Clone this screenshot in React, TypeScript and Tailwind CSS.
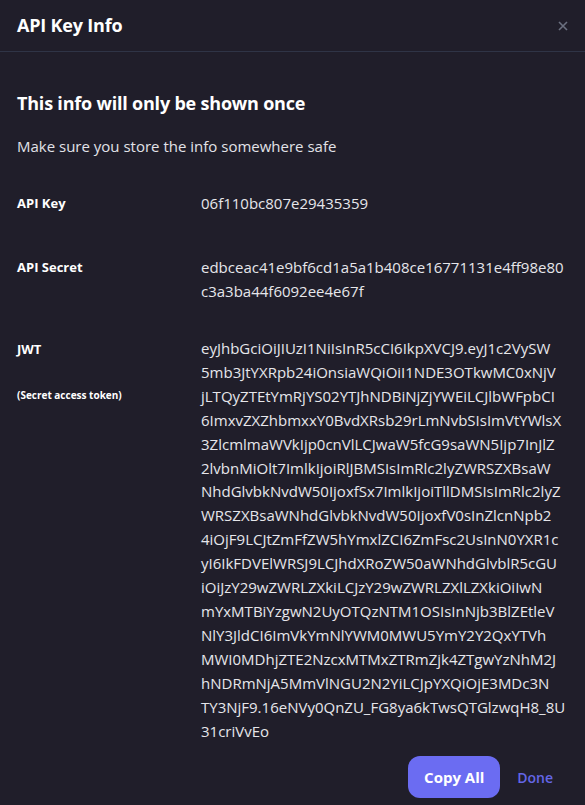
import React from "react";

const JWT_LINES = [
  "eyJhbGciOiJIUzI1NiIsInR5cCI6IkpXVCJ9.eyJ1c2VySW",
  "5mb3JtYXRpb24iOnsiaWQiOiI1NDE3OTkwMC0xNjV",
  "jLTQyZTEtYmRjYS02YTJhNDBiNjZjYWEiLCJlbWFpbCI",
  "6ImxvZXZhbmxxY0BvdXRsb29rLmNvbSIsImVtYWlsX",
  "3ZlcmlmaWVkIjp0cnVlLCJwaW5fcG9saWN5Ijp7InJlZ",
  "2lvbnMiOlt7ImlkIjoiRlJBMSIsImRlc2lyZWRSZXBsaW",
  "NhdGlvbkNvdW50IjoxfSx7ImlkIjoiTllDMSIsImRlc2lyZ",
  "WRSZXBsaWNhdGlvbkNvdW50IjoxfV0sInZlcnNpb2",
  "4iOjF9LCJtZmFfZW5hYmxlZCI6ZmFsc2UsInN0YXR1c",
  "yI6IkFDVElWRSJ9LCJhdXRoZW50aWNhdGlvblR5cGU",
  "iOiJzY29wZWRLZXkiLCJzY29wZWRLZXlLZXkiOiIwN",
  "mYxMTBiYzgwN2UyOTQzNTM1OSIsInNjb3BlZEtleV",
  "NlY3JldCI6ImVkYmNlYWM0MWU5YmY2Y2QxYTVh",
  "MWI0MDhjZTE2NzcxMTMxZTRmZjk4ZTgwYzNhM2J",
  "hNDRmNjA5MmVlNGU2N2YiLCJpYXQiOjE3MDc3N",
  "TY3NjF9.16eNVy0QnZU_FG8ya6kTwsQTGlzwqH8_8U",
  "31criVvEo",
];

export default function App() {
  return (
    <div
      className="w-[585px] h-[805px] overflow-hidden bg-[#201e2a] text-[#e6e6ea]"
      style={{ fontFamily: '"Open Sans", "Noto Sans", sans-serif' }}
    >
      {/* header */}
      <div className="h-[52px] flex items-center justify-between pl-[17px] pr-[14px] border-b border-[#2f3446]">
        <h2 className="text-[18px] font-bold text-white tracking-[-0.2px]">API Key Info</h2>
        <button className="text-[#6b7080] w-4 h-4 flex items-center justify-center">
          <svg width="10" height="10" viewBox="0 0 10 10" fill="none" stroke="currentColor" strokeWidth="1.6">
            <path d="M1 1l8 8M9 1l-8 8" />
          </svg>
        </button>
      </div>

      <div className="px-[17px] pt-[38px]">
        <h3 className="text-[18px] font-bold text-white leading-[26px] tracking-[-0.2px]">
          This info will only be shown once
        </h3>
        <p className="mt-[20px] text-[15px] leading-[20px] text-[#e2e2e8]">
          Make sure you store the info somewhere safe
        </p>

        <div className="mt-[35px] grid grid-cols-[184px_1fr]">
          <div className="text-[13px] font-bold pt-[3px] text-white">API Key</div>
          <div className="text-[15px] leading-[24px]">06f110bc807e29435359</div>
        </div>

        <div className="mt-[40px] grid grid-cols-[184px_1fr]">
          <div className="text-[13px] font-bold pt-[3px] text-white">API Secret</div>
          <div className="text-[15px] leading-[24px]">
            <div>edbceac41e9bf6cd1a5a1b408ce16771131e4ff98e80</div>
            <div>c3a3ba44f6092ee4e67f</div>
          </div>
        </div>

        <div className="mt-[34px] grid grid-cols-[184px_1fr]">
          <div className="pt-[3px]">
            <div className="text-[13px] font-bold text-white">JWT</div>
            <div className="mt-[28px] text-[10px] font-bold text-white">(Secret access token)</div>
          </div>
          <div className="text-[15px] leading-[23.9px] whitespace-nowrap">
            {JWT_LINES.map((l) => (
              <div key={l}>{l}</div>
            ))}
          </div>
        </div>

        <div className="mt-[13px] flex justify-end items-center gap-[17px] pr-[15px]">
          <button className="h-[42px] w-[92px] rounded-[12px] bg-[#6b6cf2] text-white text-[15px] font-bold">
            Copy All
          </button>
          <button className="text-[14px] font-semibold text-[#6466e6]">Done</button>
        </div>
      </div>
    </div>
  );
}
